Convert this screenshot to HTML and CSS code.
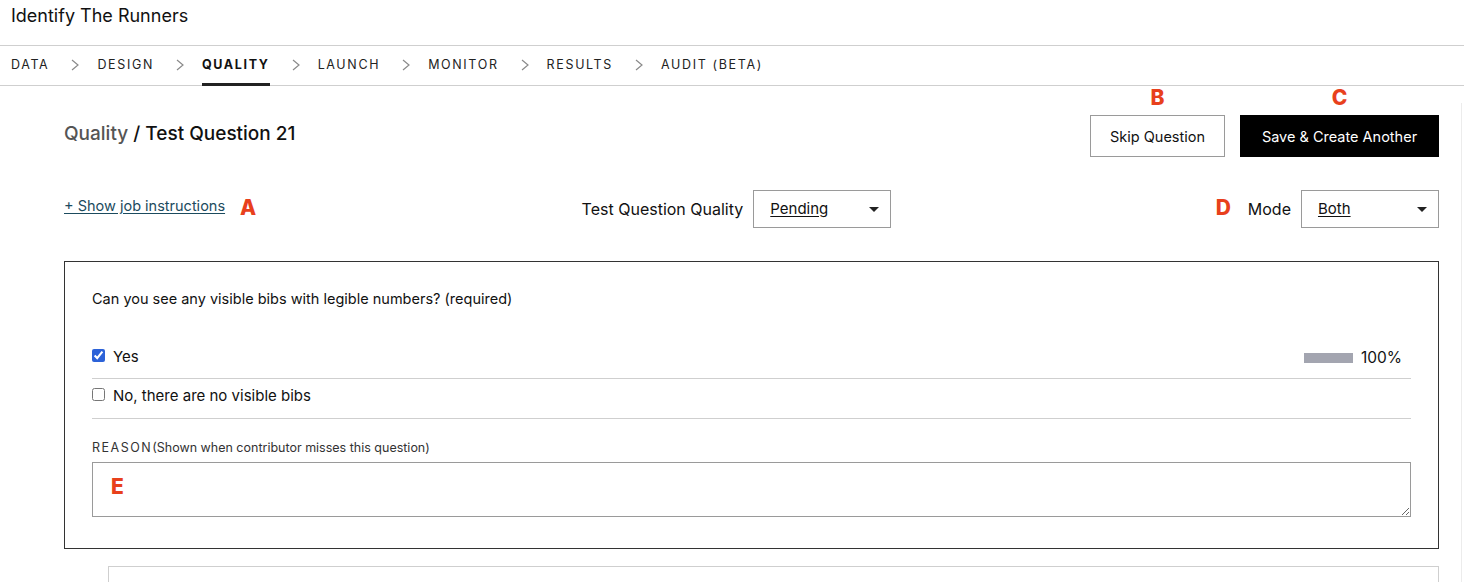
FILE: index.html
```html
<!DOCTYPE html>
<html>
<head>
<meta charset="utf-8">
<link rel="stylesheet" href="styles.css">
</head>
<body>
<header class="topbar">
  <div class="app-title">Identify The Runners</div>
</header>
<nav class="steps">
  <span class="step">DATA</span>
  <svg class="chev" viewBox="0 0 8 12"><polyline points="1,1 7,6 1,11"/></svg>
  <span class="step">DESIGN</span>
  <svg class="chev" viewBox="0 0 8 12"><polyline points="1,1 7,6 1,11"/></svg>
  <span class="step active">QUALITY</span>
  <svg class="chev" viewBox="0 0 8 12"><polyline points="1,1 7,6 1,11"/></svg>
  <span class="step">LAUNCH</span>
  <svg class="chev" viewBox="0 0 8 12"><polyline points="1,1 7,6 1,11"/></svg>
  <span class="step">MONITOR</span>
  <svg class="chev" viewBox="0 0 8 12"><polyline points="1,1 7,6 1,11"/></svg>
  <span class="step">RESULTS</span>
  <svg class="chev" viewBox="0 0 8 12"><polyline points="1,1 7,6 1,11"/></svg>
  <span class="step">AUDIT (BETA)</span>
</nav>
<main class="main">
  <div class="page">
    <div class="head-row">
      <h1 class="crumb"><span class="crumb-parent">Quality</span> / Test Question 21</h1>
      <div class="actions">
        <button class="btn btn-outline">Skip Question<span class="mark mark-top">B</span></button>
        <button class="btn btn-dark">Save &amp; Create Another<span class="mark mark-top">C</span></button>
      </div>
    </div>
    <div class="ctrl-row">
      <a class="instr-link" href="#">+ Show job instructions<span class="mark mark-right">A</span></a>
      <div class="field">
        <span class="field-label">Test Question Quality</span>
        <div class="select"><span class="select-val">Pending</span><span class="caret"></span></div>
      </div>
      <div class="field">
        <span class="mark mark-left">D</span>
        <span class="field-label">Mode</span>
        <div class="select"><span class="select-val">Both</span><span class="caret"></span></div>
      </div>
    </div>
    <section class="card">
      <p class="question">Can you see any visible bibs with legible numbers? (required)</p>
      <div class="option">
        <label class="opt-label"><input type="checkbox" checked> Yes</label>
        <div class="stat"><span class="bar"></span><span class="pct">100%</span></div>
      </div>
      <div class="option">
        <label class="opt-label"><input type="checkbox"> No, there are no visible bibs</label>
      </div>
      <div class="reason-label"><span class="caps">REASON</span>(Shown when contributor misses this question)</div>
      <div class="reason-wrap">
        <textarea class="reason"></textarea>
        <span class="mark mark-in">E</span>
      </div>
    </section>
    <section class="next-card"></section>
  </div>
</main>
</body>
</html>
```
FILE: styles.css
```css
* { box-sizing: border-box; }
html, body { margin: 0; padding: 0; background: #fff; }
body {
  font-family: Inter, "Noto Sans", "Liberation Sans", sans-serif;
  color: #111;
  overflow: hidden;
  height: 582px;
}
.topbar {
  height: 46px;
  border-bottom: 1px solid #cfcfcf;
  padding: 5px 11px 0;
}
.app-title {
  font-size: 18px;
  line-height: 22px;
  color: #111;
}
.steps {
  height: 40px;
  border-bottom: 1px solid #cfcfcf;
  display: flex;
  align-items: stretch;
  padding: 0 11px;
}
.step {
  display: flex;
  align-items: center;
  font-size: 12.5px;
  letter-spacing: 1.65px;
  color: #222;
  border-bottom: 3px solid transparent;
  margin-bottom: -1px;
}
.step.active {
  font-weight: 700;
  color: #111;
  border-bottom-color: #222;
}
.chev {
  width: 8px;
  height: 12px;
  align-self: center;
  margin: -1px 18px 0 22px;
  fill: none;
  stroke: #8a8a8a;
  stroke-width: 1.2;
}
.main { padding-top: 17px; }
.page {
  width: 1462px;
  border-right: 1px solid #ececec;
  padding: 12px 0 0 64px;
  height: 500px;
}
.head-row {
  width: 1375px;
  display: flex;
  justify-content: space-between;
  align-items: flex-start;
}
.crumb {
  margin: 7px 0 0;
  font-size: 19px;
  font-weight: 500;
  line-height: 24px;
  color: #111;
}
.crumb-parent { color: #555; }
.actions { display: flex; gap: 15px; }
.btn {
  position: relative;
  height: 42px;
  font-family: inherit;
  font-size: 14.5px;
  padding: 0 18px;
  cursor: pointer;
}
.btn-outline {
  background: #fff;
  border: 1px solid #9a9a9a;
  color: #111;
  width: 135px;
}
.btn-dark {
  background: #000;
  border: 1px solid #000;
  color: #fff;
  width: 199px;
}
.mark {
  position: absolute;
  color: #e8401c;
  font-weight: 800;
  font-size: 21px;
  line-height: 20px;
  font-family: Inter, "Liberation Sans", sans-serif;
}
.mark-top { top: -28px; left: 50%; transform: translateX(-50%); }
.ctrl-row {
  width: 1375px;
  margin-top: 33px;
  display: flex;
  justify-content: space-between;
  align-items: center;
  height: 38px;
}
.instr-link {
  position: relative;
  color: #1c4b5e;
  font-size: 14.5px;
  text-decoration: underline;
  text-underline-offset: 2px;
  margin-top: -7px;
}
.mark-right { right: -31px; top: 1px; text-decoration: none; }
.field {
  position: relative;
  display: flex;
  align-items: center;
  gap: 10px;
}
.mark-left { left: -32px; top: 8px; }
.field-label { font-size: 16px; color: #111; margin-top: -1px; }
.select {
  width: 138px;
  height: 38px;
  border: 1px solid #9a9a9a;
  display: flex;
  align-items: center;
  justify-content: space-between;
  padding: 0 11px 2px 16px;
}
.select-val {
  font-size: 15px;
  text-decoration: underline;
  text-underline-offset: 2px;
}
.caret {
  width: 0;
  height: 0;
  border-left: 5px solid transparent;
  border-right: 5px solid transparent;
  border-top: 5px solid #222;
  margin-top: 2px;
}
.card {
  width: 1375px;
  margin-top: 33px;
  border: 1px solid #333;
  padding: 27px 27px 31px 27px;
}
.question {
  margin: 0 0 30px;
  font-size: 14.5px;
  line-height: 20px;
}
.option {
  height: 40px;
  border-bottom: 1px solid #cfcfcf;
  display: flex;
  justify-content: space-between;
  padding-top: 8px;
}
.option + .option { padding-top: 7px; }
.opt-label {
  display: flex;
  align-items: flex-start;
  gap: 8px;
  font-size: 15px;
  line-height: 20px;
}
.opt-label input {
  margin: 2px 0 0;
  width: 13px;
  height: 13px;
  accent-color: #2c62d8;
}
.stat {
  display: flex;
  align-items: center;
  gap: 8px;
  height: 20px;
  padding-right: 9px;
}
.bar {
  width: 49px;
  height: 10px;
  background: #a3a5b0;
  margin-top: 2px;
}
.pct { font-size: 15.5px; }
.reason-label {
  margin-top: 21px;
  font-size: 12.5px;
  line-height: 16px;
  color: #333;
}
.caps { letter-spacing: 1.5px; }
.reason-wrap {
  position: relative;
  margin-top: 6px;
}
.reason {
  display: block;
  width: 100%;
  height: 55px;
  border: 1px solid #9a9a9a;
  resize: vertical;
  font-family: inherit;
}
.mark-in { left: 19px; top: 15px; }
.next-card {
  margin: 17px 0 0 44px;
  width: 1331px;
  height: 40px;
  border: 1px solid #cfcfcf;
}
```
